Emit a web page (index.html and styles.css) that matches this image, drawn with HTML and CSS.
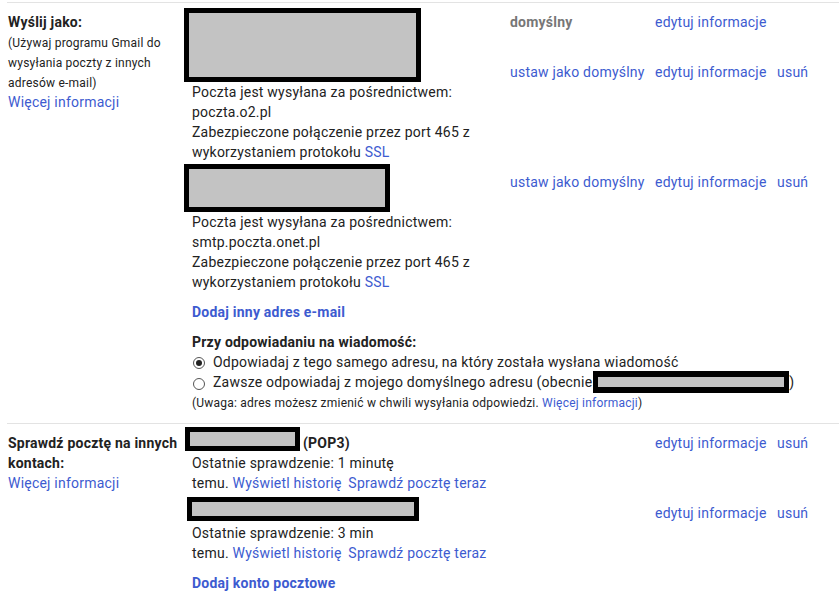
FILE: index.html
```html
<!DOCTYPE html>
<html lang="pl">
<head>
<meta charset="utf-8">
<title>Konta i importowanie</title>
<link rel="stylesheet" href="styles.css">
</head>
<body>
<div class="page">
  <section class="sect sect-send">
    <div class="label label-send">
      <div class="title">Wyślij jako:</div>
      <div class="hint">(Używaj programu Gmail do wysyłania poczty z innych adresów e-mail)</div>
      <a class="link">Więcej informacji</a>
    </div>
    <div class="middle">
      <div class="redact r1"></div>
      <div class="info">Poczta jest wysyłana za pośrednictwem:<br>poczta.o2.pl<br>Zabezpieczone połączenie przez port 465 z wykorzystaniem protokołu <a class="link">SSL</a></div>
      <div class="redact r2"></div>
      <div class="info">Poczta jest wysyłana za pośrednictwem:<br>smtp.poczta.onet.pl<br>Zabezpieczone połączenie przez port 465 z wykorzystaniem protokołu <a class="link">SSL</a></div>
      <a class="link strong add">Dodaj inny adres e-mail</a>
    </div>
    <div class="actions actions-send">
      <div class="arow"><span class="c1 default">domyślny</span><a class="c2 link">edytuj informacje</a></div>
      <div class="arow gap30"><a class="c1 link">ustaw jako domyślny</a><a class="c2 link">edytuj informacje</a><a class="link">usuń</a></div>
      <div class="arow gap90"><a class="c1 link">ustaw jako domyślny</a><a class="c2 link">edytuj informacje</a><a class="link">usuń</a></div>
    </div>
    <div class="reply">
      <div class="strong">Przy odpowiadaniu na wiadomość:</div>
      <div class="radio-row"><span class="radio checked"></span><span>Odpowiadaj z tego samego adresu, na który została wysłana wiadomość</span></div>
      <div class="radio-row"><span class="radio"></span><span>Zawsze odpowiadaj z mojego domyślnego adresu (obecnie<span class="redact inline"></span>)</span></div>
      <div class="note">(Uwaga: adres możesz zmienić w chwili wysyłania odpowiedzi. <a class="link">Więcej informacji</a>)</div>
    </div>
  </section>

  <section class="sect sect-check">
    <div class="label label-check">
      <div class="title">Sprawdź pocztę na innych kontach:</div>
      <a class="link">Więcej informacji</a>
    </div>
    <div class="middle">
      <div class="pop-row"><div class="redact r3"></div><span class="strong pop">(POP3)</span></div>
      <div class="info">Ostatnie sprawdzenie: 1 minutę<br>temu. <a class="link">Wyświetl historię</a> <a class="link sp">Sprawdź pocztę teraz</a></div>
      <div class="redact r4"></div>
      <div class="info i4">Ostatnie sprawdzenie: 3 min<br>temu. <a class="link">Wyświetl historię</a> <a class="link sp">Sprawdź pocztę teraz</a></div>
      <a class="link strong add">Dodaj konto pocztowe</a>
    </div>
    <div class="actions actions-check">
      <div class="arow"><span class="c1"></span><a class="c2 link">edytuj informacje</a><a class="link">usuń</a></div>
      <div class="arow gap50"><span class="c1"></span><a class="c2 link">edytuj informacje</a><a class="link">usuń</a></div>
    </div>
  </section>
</div>
</body>
</html>
```

FILE: styles.css
```css
html, body {
  margin: 0;
  background: #fff;
}
body {
  font-family: Roboto, "Liberation Sans", sans-serif;
  font-size: 14px;
  line-height: 20px;
  letter-spacing: 0.22px;
  color: #222;
  overflow: hidden;
}
.page {
  padding-top: 2px;
}
.link {
  color: #3d5bd0;
  text-decoration: none;
  cursor: pointer;
}
.strong {
  font-weight: bold;
}
.sect {
  margin-left: 7px;
  border-top: 1px solid #e3e3e3;
  display: grid;
  grid-template-columns: 177px 326px 1fr;
  align-items: start;
}
.sect-send {
  padding-top: 5px;
  padding-bottom: 10px;
}
.sect-check {
  padding-top: 3px;
}
.label {
  grid-row: 1 / span 2;
  padding-left: 1px;
}
.label-send {
  padding-top: 4px;
}
.label-check {
  padding-top: 6px;
  padding-right: 2px;
}
.title {
  font-weight: bold;
}
.hint {
  font-size: 12px;
  line-height: 20px;
  margin-top: 1px;
  margin-bottom: -1px;
}
.middle {
  display: flex;
  flex-direction: column;
  align-items: flex-start;
}
.redact {
  box-sizing: border-box;
  background: #c3c3c3;
  border: 5px solid #000;
}
.r1 { width: 237px; height: 74px; }
.r2 { width: 206px; height: 48px; margin-top: 2px; }
.r3 { width: 115px; height: 24px; margin-left: 1px; flex: none; }
.r4 { width: 232px; height: 24px; margin-top: 4px; margin-left: 3px; }
.redact.inline {
  display: inline-block;
  vertical-align: middle;
  width: 196px;
  height: 22px;
  border-width: 6px 5px;
  margin: -1px 0 -1px 1px;
  position: relative;
  top: -1px;
}
.info {
  padding-left: 8px;
  width: 300px;
}
.i4 {
  margin-top: 2px;
}
.add {
  margin-top: 10px;
  margin-left: 8px;
}
.sp {
  margin-left: 3px;
}
.pop-row {
  display: flex;
  align-items: flex-start;
}
.pop {
  margin-top: 6px;
  margin-left: 3px;
}
.actions-send {
  padding-top: 4px;
}
.actions-check {
  padding-top: 6px;
}
.arow {
  display: flex;
  white-space: nowrap;
}
.c1 {
  width: 145px;
  flex: none;
}
.c2 {
  width: 122px;
  flex: none;
}
.default {
  font-weight: bold;
  color: #777;
}
.gap30 { margin-top: 30px; }
.gap90 { margin-top: 90px; }
.gap50 { margin-top: 50px; }
.reply {
  grid-column: 2 / 4;
  margin-top: 10px;
  padding-left: 8px;
}
.radio-row {
  display: flex;
  align-items: center;
  white-space: nowrap;
}
.radio {
  box-sizing: border-box;
  width: 12px;
  height: 12px;
  border: 1px solid #555;
  border-radius: 50%;
  margin: 2px 8px 0 1px;
  flex: none;
  display: flex;
  align-items: center;
  justify-content: center;
}
.radio.checked::after {
  content: "";
  width: 6px;
  height: 6px;
  border-radius: 50%;
  background: #222;
}
.note {
  font-size: 12px;
  line-height: 20px;
}
```
